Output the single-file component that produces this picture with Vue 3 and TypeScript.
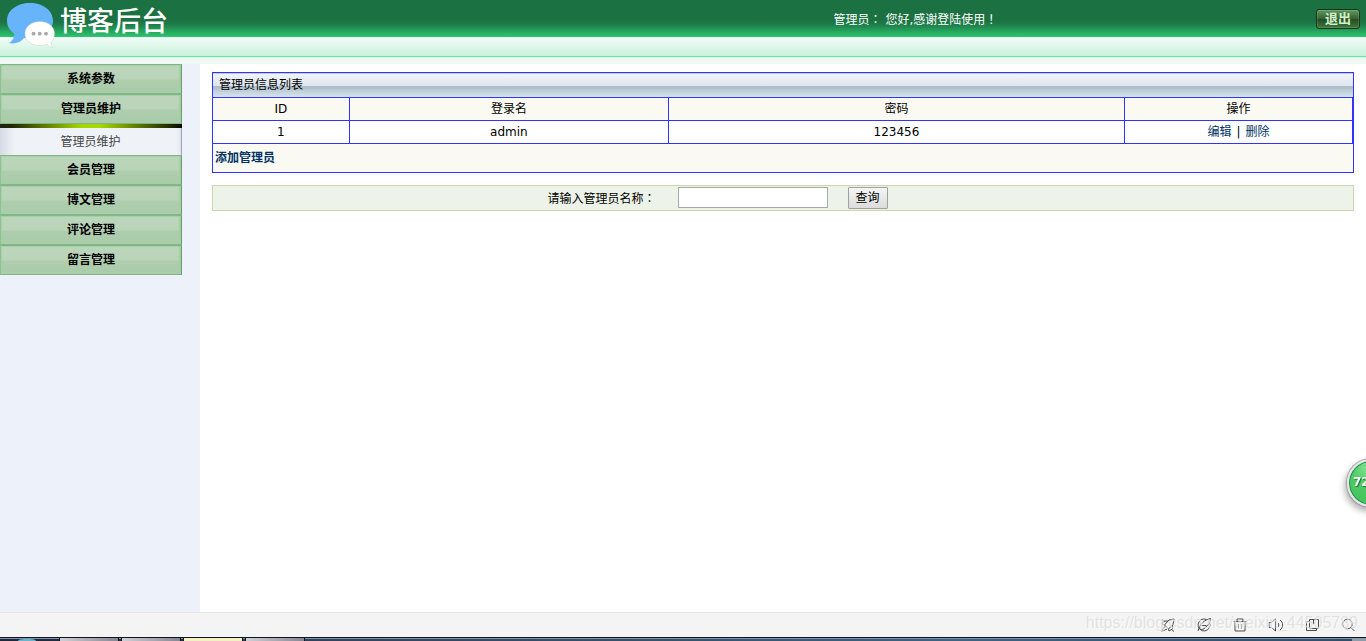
<script setup lang="ts">
import { ref } from 'vue'

interface MenuGroup {
  title: string
  children: string[]
}

interface Admin {
  id: number
  name: string
  password: string
}

const groups: MenuGroup[] = [
  { title: '系统参数', children: [] },
  { title: '管理员维护', children: ['管理员维护'] },
  { title: '会员管理', children: [] },
  { title: '博文管理', children: [] },
  { title: '评论管理', children: [] },
  { title: '留言管理', children: [] },
]
const opened = ref('管理员维护')
const columns = ['ID', '登录名', '密码', '操作']
const admins = ref<Admin[]>([{ id: 1, name: 'admin', password: '123456' }])
const keyword = ref('')

function toggle(title: string) {
  opened.value = opened.value === title ? '' : title
}
</script>

<template>
  <div class="page">
    <header class="header">
      <div class="brand">
        <svg class="logo" width="50" height="48" viewBox="0 0 50 48" aria-hidden="true">
          <path d="M25 3C12 3 2 10.500 2 20.500C2 27 5.500 31 9.500 34C9 38 7 41.500 4 43C10 44.500 16 42 19 38C36 40 48 32 48 20.500C48 10.500 38 3 25 3Z" fill="#68b4fb" />
          <path d="M35 21.500C26.500 21.500 20 26.500 20 33.500C20 40.500 26.500 45.500 35 45.500C37.500 45.500 40 45.200 42 44.300C43.500 46 46 47.300 47.500 47.500C46.500 46 46 44 46 42C48.300 40 49.500 37 49.500 33.500C49.500 26.500 43 21.500 35 21.500Z" fill="#fff" stroke="#c3d4ca" stroke-width=".5" />
          <g fill="#a9a9a9">
            <circle cx="28.500" cy="33.700" r="1.900" />
            <circle cx="34.700" cy="33.700" r="1.900" />
            <circle cx="41" cy="33.700" r="1.900" />
          </g>
        </svg>
        <h1>博客后台</h1>
      </div>
      <p class="greeting">管理员<span class="mark">：</span> 您好,感谢登陆使用<span class="mark">！</span></p>
      <button type="button" class="logout">退出</button>
    </header>

    <div class="body">
      <nav class="sidebar">
        <div v-for="group in groups" :key="group.title" class="group">
          <button type="button" class="group-title" @click="toggle(group.title)">{{ group.title }}</button>
          <div v-if="group.children.length && opened === group.title" class="submenu">
            <a v-for="child in group.children" :key="child" href="#">{{ child }}</a>
          </div>
        </div>
      </nav>

      <main class="content">
        <section class="panel">
          <h2>管理员信息列表</h2>
          <table>
            <thead>
              <tr>
                <th v-for="column in columns" :key="column">{{ column }}</th>
              </tr>
            </thead>
            <tbody>
              <tr v-for="admin in admins" :key="admin.id">
                <td>{{ admin.id }}</td>
                <td>{{ admin.name }}</td>
                <td>{{ admin.password }}</td>
                <td>
                  <div class="actions"><a href="#">编辑</a><span>|</span><a href="#">删除</a></div>
                </td>
              </tr>
            </tbody>
          </table>
          <div class="panel-foot"><a href="#">添加管理员</a></div>
        </section>

        <form class="search" @submit.prevent>
          <label for="keyword">请输入管理员名称<span class="mark">：</span></label>
          <input id="keyword" v-model="keyword" type="text" />
          <button type="submit">查询</button>
        </form>
      </main>
    </div>

    <div class="ball">72</div>

    <footer class="statusbar">
      <div class="tools">
        <svg viewBox="0 0 16 16"><path d="M14 2L9 3L4.500 8L8.500 12L13 7.500ZM8 4H4L2 7L4.500 8M12.500 8V12L9 14L8.500 12M4.500 9.500L1.500 14.500L7 12M2 2.500L5 5M11 12L14 14.500" /></svg>
        <svg viewBox="0 0 16 16"><path d="M13.500 5.500A6 6 0 1 1 10.500 2.500M2 14C4 7 8 3 14.500 1.500C14.500 5 13 8 10 9.500M5.500 8.500H10M4 12C7 13 9.500 11.500 10.500 9" /></svg>
        <svg viewBox="0 0 16 16"><path d="M1.500 4.500H14.500M5 4.500V2H11V4.500M3 4.500V14H13V4.500M6.500 7V11.500M9.500 7V11.500" /></svg>
        <svg viewBox="0 0 16 16"><path d="M1 5.500V10.500H3.500L7.500 14V2L3.500 5.500ZM10 6C11 7 11 9 10 10M12 3C15.500 5.500 15.500 10.500 12 13" /></svg>
        <svg viewBox="0 0 16 16"><path d="M5.500 2.500H14.500V11.500H5.500ZM5.500 4.500H2.500V13.500H12.500V11.500M9.500 2.500V7" /></svg>
        <svg viewBox="0 0 16 16"><circle cx="7.500" cy="7" r="4.800" /><path d="M11 10.500L14.500 14" /></svg>
      </div>
      <span class="watermark">https://blog.csdn.net/weixin_44505789</span>
    </footer>
    <div class="taskbar">
      <i class="orb"></i>
      <i class="task"></i><i class="task"></i><i class="task active"></i><i class="task"></i>
      <i class="corner"></i>
    </div>
  </div>
</template>

<style>
body {
  margin: 0;
  background: #fff;
}
</style>

<style scoped>
.page {
  display: flex;
  flex-direction: column;
  min-height: 100vh;
  font: 12px/18px "DejaVu Sans", "Noto Sans CJK SC", sans-serif;
  color: #000;
}
a {
  color: #036;
  text-decoration: none;
}
button {
  font-family: inherit;
  cursor: pointer;
}
.mark {
  font-family: "Noto Sans CJK TC", sans-serif;
}
.header {
  display: grid;
  grid-template-columns: 61% 1fr auto;
  align-items: start;
  height: 64px;
  padding-right: 6px;
  background: linear-gradient(#1b7142 0 20px, #1d7a47 24px, #2cc770 37px, #f2fcf7 37px, #c8f2dc 56px, #78e0a6 56px 57px, #d5f6e4 57px 58px, #eefaf3 58px);
}
.brand {
  display: flex;
  gap: 5px;
  padding-left: 5px;
}
.brand h1 {
  margin: 0;
  color: #fff;
  font-size: 27px;
  font-weight: 500;
  line-height: 44px;
}
.greeting {
  margin: 10px 0 0;
  padding-left: 4px;
  color: #fff;
}
.logout {
  margin-top: 9px;
  width: 44px;
  height: 20px;
  padding: 0;
  border: 1px solid #1b3518;
  border-radius: 3px;
  background: linear-gradient(#5f9a5c, #33602f 50%, #244a22 50%, #3d7a3b);
  box-shadow: inset 0 0 0 1px #ffffff26;
  color: #d3efd0;
  font-size: 13px;
  font-weight: bold;
  line-height: 16px;
}
.body {
  display: flex;
  flex: 1;
}
.sidebar {
  flex: none;
  width: 200px;
  background: #edf1fa;
}
.group {
  width: 182px;
}
.group-title {
  display: block;
  width: 100%;
  height: 30px;
  padding: 0 0 3px;
  border: 1px solid #82b686;
  border-right-color: #64a069;
  border-left-color: #8fc192;
  background: linear-gradient(#bcd6bc, #b9d4b8 48%, #aecdad 56%, #a9cca9);
  box-shadow: inset 1px 1px 0 #a6d0a8, inset -2px 0 0 #a6cda7;
  color: #000;
  font-size: 12px;
  font-weight: bold;
}
.submenu {
  border-top: 4px solid #000;
  background: linear-gradient(90deg, #d6dae5, #eff3f7 8%, #eff3f7 97%, #dce1ea);
  border-image: linear-gradient(90deg, #222 0, #1e2600 8%, #a4d800 45%, #a4d800 55%, #1e2600 92%, #000) 4;
}
.submenu a {
  display: block;
  height: 27px;
  border-right: 1px solid #9aa6b6;
  color: #444;
  line-height: 28px;
  text-align: center;
}
.content {
  flex: 1;
  padding: 8px 12px;
}
.panel {
  border: 1px solid #33f;
  background: #fafaf2;
}
.panel h2 {
  margin: 0;
  padding-left: 6px;
  border-bottom: 1px solid #33f;
  background: linear-gradient(#bfcbd6 0 1px, #f1f4f9 1px, #dde5ed 13px, #afbfca 13px 15px, #bccbd6 17px, #d5e5ec 24px);
  font-size: 12px;
  font-weight: normal;
  line-height: 24px;
}
table {
  width: 100%;
  border-spacing: 0;
  table-layout: fixed;
}
th,
td {
  box-sizing: border-box;
  height: 23px;
  padding: 0;
  border: solid #33f;
  border-width: 0 1px 1px 0;
  font-weight: normal;
  text-align: center;
}
th:nth-child(1) {
  width: 12%;
}
th:nth-child(2) {
  width: 28%;
}
th:nth-child(3) {
  width: 40%;
}
th:nth-child(4) {
  width: 20%;
}
td {
  background: #fff;
}
.actions {
  display: flex;
  justify-content: center;
  gap: 5px;
}
.panel-foot {
  padding-left: 2px;
  line-height: 28px;
}
.panel-foot a {
  font-weight: bold;
}
.search {
  display: flex;
  align-items: flex-start;
  box-sizing: border-box;
  height: 26px;
  margin-top: 12px;
  padding: 1px 0 0 29.3%;
  border: 1px solid #cad7ab;
  background: #edf3e9;
}
.search label {
  line-height: 21px;
}
.search input {
  box-sizing: border-box;
  width: 150px;
  height: 21px;
  margin: 0 20px 0 22px;
  padding: 1px 4px;
  border: 1px solid #a9a9a9;
  background: #fff;
  font: inherit;
}
.search button {
  width: 40px;
  height: 22px;
  padding: 0;
  border: 1px solid #a0a0a0;
  border-radius: 1px;
  background: linear-gradient(#f5f5f5, #dcdcdc);
  color: #000;
  font-size: 12px;
  line-height: 18px;
}
.ball {
  position: fixed;
  top: 459px;
  right: -29px;
  box-sizing: border-box;
  width: 48px;
  height: 48px;
  padding-left: 4px;
  border: 2px solid #e4e6e5;
  border-radius: 50%;
  background: radial-gradient(circle at 50% 15%, #8be59a, #4ecb63 45%, #44c35a 85%, #268a55);
  box-shadow: inset 0 0 0 1px #1f8a5c, 0 0 1px 1px #999, -2px 4px 7px #0005;
  color: #fff;
  font: bold 12px/42px "DejaVu Sans", sans-serif;
  text-shadow: 1px 1px 1px #176b34;
}
.statusbar {
  position: relative;
  display: flex;
  justify-content: flex-end;
  height: 24px;
  border-top: 1px solid #e5e5e5;
  background: #f4f4f4;
}
.tools {
  display: flex;
  align-items: center;
  gap: 20px;
  padding-right: 10px;
}
.tools svg {
  width: 16px;
  height: 16px;
  fill: none;
  stroke: #4a4a4a;
  stroke-width: 1;
}
.watermark {
  position: absolute;
  right: 8px;
  top: 1px;
  color: #d6d6d6a6;
  font: 16px/18px "Liberation Sans", sans-serif;
  text-shadow: 1px 1px 0 #ffffff99;
}
.taskbar {
  display: flex;
  gap: 2px;
  box-sizing: border-box;
  height: 4px;
  border-top: 1px solid #10151d;
  background: linear-gradient(#8195aa 0 1px, transparent 1px), linear-gradient(90deg, #1e2838, #35435f 25%, #34546f 50%, #3c6485 70%, #2e4d69);
}
.orb {
  width: 18px;
  margin: 1px 21px 0 18px;
  border-radius: 9px 9px 0 0 / 3px 3px 0 0;
  background: #66b4cd;
}
.task {
  box-sizing: border-box;
  width: 60px;
  border: solid #11151c;
  border-width: 0 1px;
  background: linear-gradient(90deg, #d0d1d5, #858692);
}
.task.active {
  background: #f3f0c5;
}
.corner {
  width: 14px;
  margin-left: auto;
  background: #8e9ba8;
}
</style>
